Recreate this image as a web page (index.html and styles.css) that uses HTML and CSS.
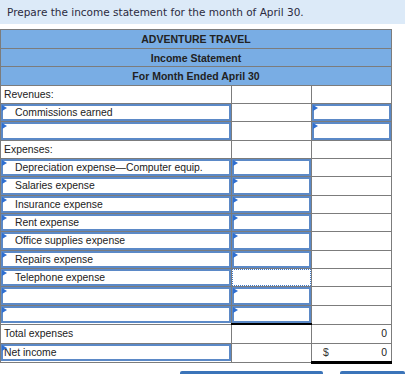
FILE: index.html
```html
<!DOCTYPE html>
<html>
<head>
<meta charset="utf-8">
<link rel="stylesheet" href="styles.css">
</head>
<body>
<div class="prompt">Prepare the income statement for the month of April 30.</div>
<table class="stmt">
  <colgroup><col class="c1"><col class="c2"><col class="c3"></colgroup>
  <tr class="hd first"><th colspan="3">ADVENTURE TRAVEL</th></tr>
  <tr class="hd"><th colspan="3">Income Statement</th></tr>
  <tr class="hd"><th colspan="3">For Month Ended April 30</th></tr>
  <tr><td class="lbl">Revenues:</td><td></td><td></td></tr>
  <tr><td class="in"><div class="box acct">Commissions earned</div></td><td></td><td class="in"><div class="box"></div></td></tr>
  <tr><td class="in"><div class="box acct"></div></td><td></td><td class="in"><div class="box"></div></td></tr>
  <tr><td class="lbl">Expenses:</td><td></td><td></td></tr>
  <tr><td class="in"><div class="box acct">Depreciation expense—Computer equip.</div></td><td class="in"><div class="box"></div></td><td></td></tr>
  <tr><td class="in"><div class="box acct">Salaries expense</div></td><td class="in"><div class="box"></div></td><td></td></tr>
  <tr><td class="in"><div class="box acct">Insurance expense</div></td><td class="in"><div class="box"></div></td><td></td></tr>
  <tr><td class="in"><div class="box acct">Rent expense</div></td><td class="in"><div class="box"></div></td><td></td></tr>
  <tr><td class="in"><div class="box acct">Office supplies expense</div></td><td class="in"><div class="box"></div></td><td></td></tr>
  <tr><td class="in"><div class="box acct">Repairs expense</div></td><td class="in"><div class="box"></div></td><td></td></tr>
  <tr><td class="in"><div class="box acct">Telephone expense</div></td><td class="in"><div class="box focus"></div></td><td></td></tr>
  <tr><td class="in"><div class="box acct"></div></td><td class="in"><div class="box"></div></td><td></td></tr>
  <tr><td class="in"><div class="box acct"></div></td><td class="in"><div class="box"></div></td><td></td></tr>
  <tr><td class="lbl">Total expenses</td><td class="sum"></td><td class="num">0</td></tr>
  <tr><td class="in"><div class="box plain">Net income</div></td><td></td><td class="num net"><span>$</span><span>0</span></td></tr>
</table>
<div class="actions">
  <div class="btn wide"></div>
  <div class="btn"></div>
</div>
</body>
</html>
```
FILE: styles.css
```css
html, body {
  margin: 0;
  padding: 0;
  background: #ffffff;
}
body {
  width: 405px;
  height: 374px;
  overflow: hidden;
  font-family: "Liberation Sans", Arial, sans-serif;
  color: #222222;
}
.prompt {
  height: 24px;
  box-sizing: border-box;
  background: #dceaf8;
  font-family: "DejaVu Sans", Verdana, sans-serif;
  font-size: 10.5px;
  line-height: 24px;
  padding-left: 7px;
  color: #2b2b3f;
}
.stmt {
  margin-top: 5px;
  border-collapse: collapse;
  table-layout: fixed;
  width: 392px;
  font-size: 10.4px;
}
.c1 { width: 231px; }
.c2 { width: 80px; }
.c3 { width: 80px; }
.stmt td, .stmt th {
  border: 1px solid #7c7c7c;
  padding: 0;
  height: 17.35px;
  vertical-align: middle;
}
.hd th {
  background: #79ade4;
  font-size: 10.5px;
  font-weight: bold;
  color: #222222;
  text-align: center;
}
.hd.first th { height: 18px; }
.lbl { padding-left: 3px !important; }
.in { position: relative; }
.box {
  position: relative;
  box-sizing: border-box;
  height: 17.35px;
  border: 2px solid #5b89c7;
  line-height: 13px;
}
.box::before {
  content: "";
  position: absolute;
  left: -1px;
  top: -1px;
  border-left: 5px solid #2f6fd1;
  border-top: 3px solid transparent;
  border-bottom: 3px solid transparent;
}
.acct { padding-left: 12px; }
.plain { padding-left: 1px; }
.focus {
  border: 1px dotted #3a78cc;
}
.focus::before { display: none; }
.sum { border-top: 2px solid #000000 !important; }
.num { text-align: right; padding-right: 4px !important; }
.net {
  border-top: 1px solid #000000 !important;
  border-bottom: 3px solid #000000 !important;
}
.net span:first-child { float: left; padding-left: 11px; color: #333; }
.actions {
  display: flex;
  gap: 17px;
  padding-left: 180px;
  margin-top: 7px;
}
.btn {
  height: 20px;
  width: 65px;
  background: #3b74b9;
  border-radius: 2px;
}
.btn.wide { width: 143px; }
```
